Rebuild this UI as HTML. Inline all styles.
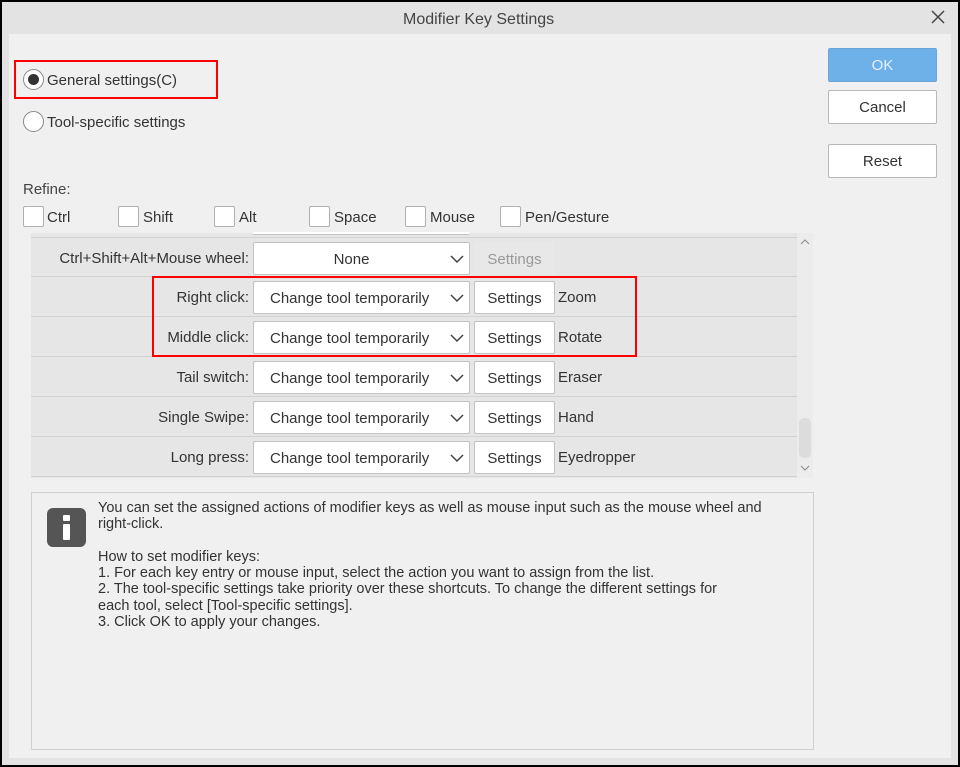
<!DOCTYPE html>
<html><head><meta charset="utf-8"><style>
*{box-sizing:border-box;margin:0;padding:0}
body{width:960px;height:767px;background:#000;font-family:"Liberation Sans","Noto Sans CJK JP",sans-serif;color:#333;overflow:hidden;position:relative}
.win{position:absolute;left:2px;top:2px;width:956px;height:763px;background:#e3e3e3}
.body{position:absolute;left:9px;top:34px;width:942px;height:724px;background:#f0f0f0}
.a{position:absolute}
.t{font-size:15px;white-space:nowrap}
.radio{position:absolute;width:21px;height:21px;border-radius:50%;border:1px solid #8a8a8a;background:#fff}
.cb{position:absolute;width:21px;height:21px;border:1px solid #b0b0b0;background:#fff;border-radius:2px}
.btn{position:absolute;left:828px;width:109px;height:34px;border:1px solid #b8b8b8;background:#fff;border-radius:2px;text-align:center;line-height:34px;font-size:15px;color:#333}
.row{position:absolute;left:31px;width:766px;height:40px;background:#e6e6e6;border-bottom:1px solid #d2d2d2}
.lab{position:absolute;right:548px;top:12px;font-size:15px;white-space:nowrap}
.dd{position:absolute;left:222px;top:4px;width:217px;height:33px;background:#fff;border:1px solid #c2c2c2;border-radius:2px;font-size:15px;line-height:33px;padding-left:16px}
.dd svg{position:absolute;right:4px;top:11px}
.sb{position:absolute;left:443px;top:4px;width:81px;height:33px;background:#fff;border:1px solid #c2c2c2;border-radius:2px;font-size:15px;line-height:33px;text-align:center}
.val{position:absolute;left:527px;top:12px;font-size:15px}
.red{position:absolute;border:2px solid #f00}
.info{position:absolute;left:31px;top:492px;width:783px;height:258px;border:1px solid #cfcfcf;background:#f0f0f0}
.info p{position:absolute;left:66px;top:7px;width:710px;font-size:14.5px;line-height:16.3px;color:#333;white-space:nowrap}
</style></head><body>
<div class="win"></div>
<div class="body"></div>
<div class="a t" style="left:403px;top:11px;font-size:16px;color:#444">Modifier Key Settings</div>
<svg class="a" style="left:931px;top:10px" width="14" height="14"><path d="M1 1L13 13M13 1L1 13" stroke="#444" stroke-width="1.5"/></svg>

<div class="radio" style="left:23px;top:69px"><div style="position:absolute;left:4px;top:4px;width:11px;height:11px;border-radius:50%;background:#333"></div></div>
<div class="a t" style="left:47px;top:72px">General settings(C)</div>
<div class="red" style="left:14px;top:60px;width:204px;height:39px"></div>
<div class="radio" style="left:23px;top:111px"></div>
<div class="a t" style="left:47px;top:114px">Tool-specific settings</div>

<div class="a t" style="left:23px;top:181px;color:#444">Refine:</div>
<div class="cb" style="left:23px;top:206px"></div><div class="a t" style="left:47px;top:209px">Ctrl</div>
<div class="cb" style="left:118px;top:206px"></div><div class="a t" style="left:143px;top:209px">Shift</div>
<div class="cb" style="left:214px;top:206px"></div><div class="a t" style="left:239px;top:209px">Alt</div>
<div class="cb" style="left:309px;top:206px"></div><div class="a t" style="left:334px;top:209px">Space</div>
<div class="cb" style="left:405px;top:206px"></div><div class="a t" style="left:430px;top:209px">Mouse</div>
<div class="cb" style="left:500px;top:206px"></div><div class="a t" style="left:525px;top:209px">Pen/Gesture</div>

<div class="a" style="left:31px;top:233px;width:782px;height:245px;background:#e6e6e6"></div>
<div class="a" style="left:253px;top:232px;width:216px;height:3px;border-bottom:1px solid #c2c2c2;background:#fff"></div>
<div class="row" style="top:237px;border-top:1px solid #d2d2d2"><div class="lab">Ctrl+Shift+Alt+Mouse wheel:</div><div class="dd" style="padding-left:0;text-align:center;padding-right:20px">None<svg width="16" height="10"><path d="M2 2L8 8L14 2" fill="none" stroke="#444" stroke-width="1.5"/></svg></div><div class="sb" style="background:#e8e8e8;border-color:#e8e8e8;color:#999">Settings</div></div>
<div class="row" style="top:277px"><div class="lab">Right click:</div><div class="dd">Change tool temporarily<svg width="16" height="10"><path d="M2 2L8 8L14 2" fill="none" stroke="#444" stroke-width="1.5"/></svg></div><div class="sb">Settings</div><div class="val">Zoom</div></div>
<div class="row" style="top:317px"><div class="lab">Middle click:</div><div class="dd">Change tool temporarily<svg width="16" height="10"><path d="M2 2L8 8L14 2" fill="none" stroke="#444" stroke-width="1.5"/></svg></div><div class="sb">Settings</div><div class="val">Rotate</div></div>
<div class="row" style="top:357px"><div class="lab">Tail switch:</div><div class="dd">Change tool temporarily<svg width="16" height="10"><path d="M2 2L8 8L14 2" fill="none" stroke="#444" stroke-width="1.5"/></svg></div><div class="sb">Settings</div><div class="val">Eraser</div></div>
<div class="row" style="top:397px"><div class="lab">Single Swipe:</div><div class="dd">Change tool temporarily<svg width="16" height="10"><path d="M2 2L8 8L14 2" fill="none" stroke="#444" stroke-width="1.5"/></svg></div><div class="sb">Settings</div><div class="val">Hand</div></div>
<div class="row" style="top:437px"><div class="lab">Long press:</div><div class="dd">Change tool temporarily<svg width="16" height="10"><path d="M2 2L8 8L14 2" fill="none" stroke="#444" stroke-width="1.5"/></svg></div><div class="sb">Settings</div><div class="val">Eyedropper</div></div>
<div class="red" style="left:152px;top:276px;width:485px;height:81px"></div>

<div class="a" style="left:797px;top:233px;width:16px;height:245px;background:#ececec"></div>
<svg class="a" style="left:800px;top:238px" width="10" height="8"><path d="M1 6L5 2L9 6" fill="none" stroke="#888" stroke-width="1"/></svg>
<svg class="a" style="left:800px;top:464px" width="10" height="8"><path d="M1 2L5 6L9 2" fill="none" stroke="#888" stroke-width="1"/></svg>
<div class="a" style="left:799px;top:418px;width:12px;height:40px;background:#dcdcdc;border-radius:5px"></div>

<div class="info">
<div class="a" style="left:15px;top:15px;width:39px;height:39px;background:#555;border-radius:6px"><div class="a" style="left:16px;top:7px;width:7px;height:6px;background:#fff;border-radius:1px"></div><div class="a" style="left:16px;top:16px;width:7px;height:16px;background:#fff;border-radius:1px"></div></div>
<p>You can set the assigned actions of modifier keys as well as mouse input such as the mouse wheel and<br>right-click.<br><br>How to set modifier keys:<br>1. For each key entry or mouse input, select the action you want to assign from the list.<br>2. The tool-specific settings take priority over these shortcuts. To change the different settings for<br>each tool, select [Tool-specific settings].<br>3. Click OK to apply your changes.</p>
</div>

<div class="btn" style="top:48px;background:#6eb0e8;border-color:#6aa6d8;color:#e6f0fa">OK</div>
<div class="btn" style="top:90px">Cancel</div>
<div class="btn" style="top:144px">Reset</div>
</body></html>
